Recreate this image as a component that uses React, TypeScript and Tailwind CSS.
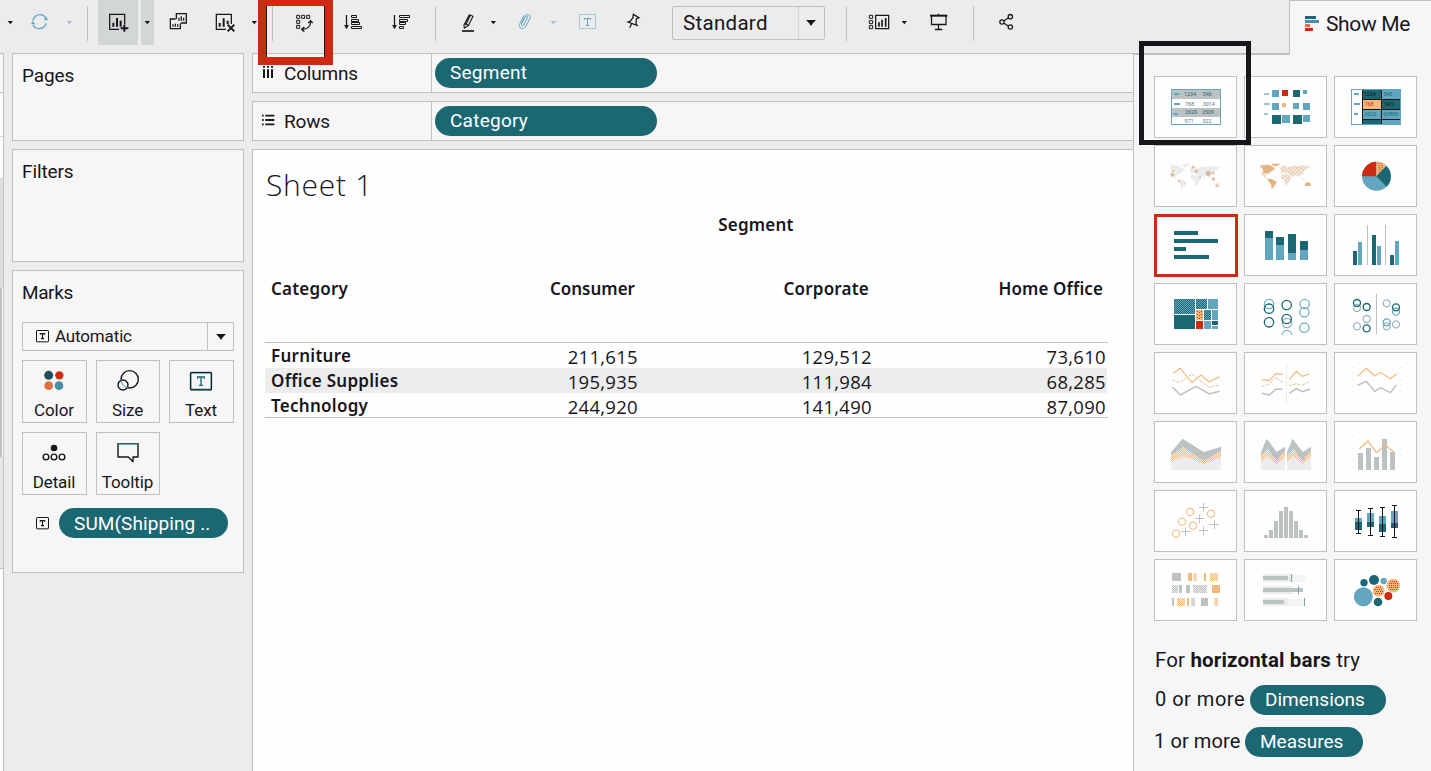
import React from "react";

const TEAL = "#1b6872";
const BLUE = "#63a6c0";
const RED = "#cd2a12";
const ORANGE = "#f4b878";
const GRAY = "#bcc1c1";
const INK = "#18161b";
const PALE = "#ececec";

type Node = React.ReactNode;

/* ---------- toolbar ---------- */

function Tool({ x, w, off = 0, shaded = false, children }: { x: number; w: number; off?: number; shaded?: boolean; children?: Node }) {
  return (
    <button className={shaded ? "h-[45px] shrink-0 bg-[#d3d6d6]" : "h-[45px] shrink-0"}>
      <svg width={w} height={45} viewBox={`${(x - off) * 3} 0 ${w * 3} 135`} fill="none" stroke={INK} strokeWidth="3.8">
        {children}
      </svg>
    </button>
  );
}

function Caret({ cx, color = INK }: { cx: number; color?: string }) {
  return <path d={`M${cx - 8} 63h16l-5 6l-3 4l-3 -4z`} fill={color} stroke="none" />;
}

function Divider() {
  return <div className="mt-[6px] h-[35px] w-px shrink-0 bg-[#bcc1c1]" />;
}

function Toolbar() {
  return (
    <div className="flex h-[53px] min-w-0 flex-1 items-start overflow-hidden">
      <Tool x={0} w={20}><Caret cx={31} /></Tool>
      <Tool x={20} w={40}>
        <g stroke={BLUE}>
          <path d="M98 62c4 -12 12 -18 22 -18c10 0 16 6 19 14M139 70c-4 11 -12 16 -21 16c-9 0 -15 -4 -19 -12" />
          <path d="M132 60h12l-6 -9zM93 72h12l-6 -8z" fill={BLUE} strokeWidth="1" />
        </g>
      </Tool>
      <Tool x={60} w={27}><Caret cx={208} color="#9cbfcc" /></Tool>
      <Divider />
      <div className="w-[10px] shrink-0" />
      <Tool x={98} w={40} shaded>
        <path d="M357 88H329V43H374V74" />
        <path d="M340 80V68M351 80V54M362 80V62M373 75V95M362 85H385" strokeWidth="6" />
      </Tool>
      <div className="w-[3px] shrink-0" />
      <Tool x={141} w={13} shaded><Caret cx={442} /></Tool>
      <Tool x={154} w={46}>
        <path d="M529 56V41H559V69H543M529 57V41" />
        <path d="M527 57H511V86H541V70M519 80V73M526 80V71M533 80V73M537 62V53M544 62V49M551 62V53" />
      </Tool>
      <Tool x={200} w={46}>
        <path d="M678 88H649V43H694V72" />
        <path d="M659 80V69M671 80V55M683 72V62" strokeWidth="6" />
        <path d="M683 74L703 94M703 74L683 94" strokeWidth="6" />
      </Tool>
      <Tool x={246} w={26}><Caret cx={763} /></Tool>
      <Divider />
      <Tool x={273} w={57}>
        <path d="M890 46h9v9h-9zM905 46h9v9h-9zM920 46h9v9h-9zM890 61h9v9h-9zM890 76h9v9h-9z" strokeWidth="3" />
        <path d="M932 65C932 80 921 88 908 88M925 69L932 62L938 69M913 81L905 88L913 95" />
      </Tool>
      <Tool x={330} w={40}>
        <path d="M1039.500 45V78" />
        <path d="M1033 76H1046L1039.500 87Z" fill={INK} strokeWidth="1" />
        <path d="M1054.500 46.500h15v6h-15zM1054.500 58.500h21v6h-21zM1054.500 67.500h24v6h-24zM1054.500 79.500h30v6h-30z" strokeWidth="3" />
      </Tool>
      <Tool x={370} w={65}>
        <path d="M1183.500 45V78" />
        <path d="M1177 76H1190L1183.500 87Z" fill={INK} strokeWidth="1" />
        <path d="M1198.500 46.500h30v6h-30zM1198.500 58.500h24v6h-24zM1198.500 67.500h18v6h-18zM1198.500 79.500h12v6h-12z" strokeWidth="3" />
      </Tool>
      <Divider />
      <Tool x={436} w={44} off={430}>
        <path d="M96 93H132" strokeWidth="5" />
        <path d="M102 75L118 44L129 49L115 77L103 84ZM104 70L115 76M120 47L107 76" strokeWidth="3.400" />
      </Tool>
      <Tool x={480} w={30} off={430}><Caret cx={190} /></Tool>
      <Tool x={510} w={30} off={430}>
        <path d="M275 72L286 49C288 42 300 41 301 50C301 53 300 55 299 57L288 78C284 88 269 88 268 77C268 74 269 72 270 70L282 46M281 75L292 54C295 47 286 45 283 53L275 70C272 79 279 80 283 72" stroke={BLUE} strokeWidth="3" />
      </Tool>
      <Tool x={540} w={30} off={430}><Caret cx={370} color="#9cbfcc" /></Tool>
      <Tool x={570} w={40} off={430}>
        <path d="M448.500 43.500H496.500V85.500H448.500Z" stroke={BLUE} strokeDasharray="3 3" strokeWidth="3" />
        <path d="M463 60V55.500H482V60M472.500 55V76M467 76.500H478" stroke={BLUE} strokeWidth="3" />
      </Tool>
      <Tool x={610} w={45} off={430}>
        <path d="M610 43L627 53L619 57L618 71L621 76L594 66L600 64L609 53ZM605 71L599 83" />
      </Tool>
      <div className="w-[17px] shrink-0" />
      <button className="mt-[6px] flex h-[34px] w-[153px] shrink-0 items-stretch rounded-[2px] border border-[#bcc1c1]">
        <span className="flex w-[126px] items-center border-r border-dotted border-[#bcc1c1] pl-[10px] text-[20.5px] tracking-[0.3px]">Standard</span>
        <span className="flex flex-1 items-center justify-center pr-px">
          <svg width="12" height="8" viewBox="0 0 12 8"><path d="M1 1h10l-3 3l-2 3l-2 -3z" fill={INK} /></svg>
        </span>
      </button>
      <div className="w-[21px] shrink-0" />
      <Divider />
      <Tool x={847} w={48} off={830}>
        <path d="M118 46h10v9h-10zM118 62h10v9h-10zM118 77h10v9h-10z" strokeWidth="3" />
        <path d="M137 46H176V86H137Z" />
        <path d="M147 80V67M156 80V59M167 80V54" strokeWidth="5" />
      </Tool>
      <Tool x={895} w={20} off={830}><Caret cx={223} /></Tool>
      <Tool x={915} w={58} off={830}>
        <path d="M300 47H352" strokeWidth="6" />
        <path d="M304.500 47V73.500H348V47M325.500 41V47M325.500 73V88M315 88.500H337" />
      </Tool>
      <Divider />
      <Tool x={974} w={60} off={830}>
        <circle cx="541" cy="50" r="6.500" /><circle cx="516" cy="66" r="6.500" /><circle cx="541" cy="81" r="6.500" />
        <path d="M522 62L535 54M522 70L535 78" />
      </Tool>
    </div>
  );
}

/* ---------- left cards ---------- */

function TextGlyph() {
  return (
    <svg width="13" height="13" viewBox="0 0 39 39" fill="none" stroke={INK} strokeWidth="3">
      <rect x="1.500" y="1.500" width="36" height="34" rx="2" />
      <path d="M13 14V11H26V14M19.500 11V26M15 26H24" strokeWidth="3.500" />
    </svg>
  );
}

function Tile({ label, view, children }: { label: string; view: string; children: Node }) {
  return (
    <button className="flex h-[63px] flex-col items-center border border-[#bcc1c1] text-[17px] leading-[22px]">
      <svg width="60" height="38" viewBox={view} fill="none" stroke={INK} strokeWidth="4.200">{children}</svg>
      <span className="-ml-px">{label}</span>
    </button>
  );
}

function Sidebar() {
  return (
    <aside className="ml-2 flex w-[232px] shrink-0 flex-col gap-2 text-[19px] leading-6 tracking-[-0.1px]">
      <section className="h-[88px] border border-[#bcc1c1] bg-[#f6f6f6] pl-[9px] pt-[10px]">Pages</section>
      <section className="h-[113px] border border-[#bcc1c1] bg-[#f6f6f6] pl-[9px] pt-[10px]">Filters</section>
      <section className="h-[303px] border border-[#bcc1c1] bg-[#f6f6f6] px-[9px] pt-[10px]">
        <h2 className="h-6 tracking-[-0.4px]">Marks</h2>
        <button className="mt-[17px] flex h-[29px] w-[212px] items-stretch rounded-[1px] border border-[#bcc1c1] text-[17px]">
          <span className="flex w-[185px] items-center gap-[6px] border-r border-[#bcc1c1] pb-px pl-[13px]">
            <TextGlyph />
            <span className="tracking-[-0.15px]">Automatic</span>
          </span>
          <span className="flex flex-1 items-center justify-center">
            <svg width="12" height="8" viewBox="0 0 12 8"><path d="M1 1h10l-3 3l-2 3l-2 -3z" fill={INK} /></svg>
          </span>
        </button>
        <div className="mt-[9px] grid grid-cols-[65px_64px_65px] gap-x-[9px] gap-y-[9px]">
          <Tile label="Color" view="74 33 180 114">
            <g stroke="none">
              <circle cx="145" cy="76" r="13.500" fill="#1f4f5d" />
              <circle cx="177" cy="76" r="12.500" fill={RED} />
              <circle cx="145" cy="107" r="13" fill="#e0713e" />
              <circle cx="176" cy="107" r="13" fill="#4590a8" />
            </g>
          </Tile>
          <Tile label="Size" view="294 33 180 114">
            <circle cx="389" cy="88" r="26" />
            <circle cx="369" cy="105" r="15" fill="#f6f6f6" />
            <path d="M363 88A26 26 0 0 0 385 114" stroke="#4c8796" strokeWidth="3" />
          </Tile>
          <Tile label="Text" view="516 33 180 114">
            <rect x="572" y="68" width="62" height="51" rx="2" stroke={TEAL} strokeWidth="5" />
            <rect x="571.500" y="67.500" width="63" height="52" rx="2" strokeWidth="2.500" />
            <path d="M593 86V81H613V86M603 81V106M597 106H609" stroke={TEAL} strokeWidth="4" />
          </Tile>
          <Tile label="Detail" view="74 249 180 114">
            <circle cx="161" cy="294" r="10" fill={INK} stroke="none" />
            <circle cx="137" cy="321" r="8.500" /><circle cx="161" cy="321" r="8.500" /><circle cx="185" cy="321" r="8.500" />
          </Tile>
          <Tile label="Tooltip" view="294 249 180 114">
            <path d="M354 281H414V321H399V335L385 321H354Z" strokeLinejoin="round" />
            <path d="M355 281H413" stroke={TEAL} strokeWidth="4" />
          </Tile>
        </div>
        <div className="mt-[13px] flex items-center gap-[10px] pl-[14px]">
          <TextGlyph />
          <span className="flex h-[30px] w-[169px] items-center rounded-full bg-[#1b6872] pl-[15px] pt-px text-[19px] tracking-[0.1px] text-white">SUM(Shipping ..</span>
        </div>
      </section>
    </aside>
  );
}

/* ---------- worksheet ---------- */

const ROWS = [
  ["Furniture", "211,615", "129,512", "73,610"],
  ["Office Supplies", "195,935", "111,984", "68,285"],
  ["Technology", "244,920", "141,490", "87,090"],
];

function Shelf({ label, pill, icon }: { label: string; pill: string; icon: Node }) {
  return (
    <div className="flex h-10 shrink-0 border-y border-l border-[#bcc1c1] bg-[#f6f6f6] text-[19px]">
      <div className="flex w-[179px] shrink-0 items-center border-r border-[#bcc1c1] pl-[9px]">
        <span className="pb-0.5">{icon}</span>
        <span className="ml-[9px] pt-[3px] tracking-[-0.2px]">{label}</span>
      </div>
      <div className="flex items-center pl-[3px]">
        <span className="flex h-[30px] w-[222px] items-center rounded-full bg-[#1b6872] pl-[15px] pt-px tracking-[0.25px] text-white">{pill}</span>
      </div>
    </div>
  );
}

function Worksheet() {
  return (
    <main className="ml-2 flex w-[881px] shrink-0 flex-col gap-2">
      <Shelf
        label="Columns"
        pill="Segment"
        icon={
          <svg width="13" height="12" viewBox="0 0 39 36" stroke={INK} strokeWidth="6">
            <path d="M6 0V5M6 10V36M18 0V5M18 10V36M30 0V5M30 10V36" />
          </svg>
        }
      />
      <Shelf
        label="Rows"
        pill="Category"
        icon={
          <svg width="13" height="12" viewBox="0 0 39 36" stroke={INK} strokeWidth="5.500">
            <path d="M0 5H5M10 5H37M0 18H5M10 18H37M0 31H5M10 31H37" />
          </svg>
        }
      />
      <section className="flex-1 border-l border-t border-[#bcc1c1] bg-[#fefefe] pl-3 font-['Open_Sans',sans-serif] text-[18px]">
        <h1 className="h-[60px] pt-[15px] pl-px text-[30px] font-light leading-[40px] tracking-[0.75px]">Sheet 1</h1>
        <div className="w-[843px]">
          <div className="grid h-[132px] grid-cols-[140px_234px_234px_234px] grid-rows-[30px_98px] font-['Noto_Sans',sans-serif] text-[17px] font-semibold tracking-[0.2px]">
            <div className="col-span-3 col-start-2 flex items-center justify-center">Segment</div>
            <div className="flex items-center pl-[6px]">Category</div>
            <div className="flex items-center justify-end pr-1 tracking-normal">Consumer</div>
            <div className="flex items-center justify-end pr-1">Corporate</div>
            <div className="flex items-center justify-end pr-1 tracking-[0.1px]">Home Office</div>
          </div>
          <div className="border-y border-[#bcc1c1]">
            {ROWS.map((row, i) => (
              <div key={row[0]} className={`grid grid-cols-[140px_234px_234px_234px] leading-[24px] ${i === 1 ? "h-[25px] w-[842px] bg-[#ececec]" : i === 2 ? "h-[24px]" : "h-[25px]"}`}>
                <span className="whitespace-nowrap pl-[6px] pt-px font-['Noto_Sans',sans-serif] text-[17px] font-semibold tracking-[0.28px]">{row[0]}</span>
                {row.slice(1).map((v) => (
                  <span key={v} className="pr-px pt-[2px] text-right text-[18.5px] tracking-[0.3px]">{v}</span>
                ))}
              </div>
            ))}
          </div>
        </div>
      </section>
    </main>
  );
}

/* ---------- chart gallery ---------- */

const bars = (color: string, list: number[][]) =>
  list.map(([x, y, w, h], i) => <rect key={i} x={x} y={y} width={w} height={h} fill={color} />);

const rings = (color: string, r: number, list: number[][], width = 4) =>
  list.map(([x, y], i) => <circle key={i} cx={x} cy={y} r={r} fill="none" stroke={color} strokeWidth={width} />);

const tiny = (list: [number, number, string, string][]) =>
  list.map(([x, y, s, fill]) => (
    <text key={s} x={x} y={y} fontSize="16" textAnchor="middle" fill={fill}>{s}</text>
  ));

const LAND = "M108 319L120 315L138 317L137 322L144 326L150 325L152 333L145 334L138 342L128 345L122 352L128 356L134 359L131 360L120 354L112 344L117 330L110 325ZM142 314L155 312L168 312L160 319L151 322L144 318ZM133 359L143 359L158 368L153 378L148 380L144 390L141 386L141 375L133 366ZM172 321L180 317L190 324L212 319L222 320L230 318L258 321L254 326L243 333L239 342L231 346L228 353L222 350L215 347L208 354L204 347L200 352L194 344L185 340L170 342L172 334L168 328ZM171 346L188 344L198 352L204 353L196 364L191 376L184 377L180 362L171 357ZM244 370L254 367L260 374L258 380L246 380L242 376ZM230 354L239 363L246 366L238 358Z";

const THUMBS: { name: string; y: number; art: Node }[] = [
  {
    name: "Text table", y: 48, art: <>
      <rect x="112.500" y="88.500" width="147" height="105" fill="#fefefe" stroke={BLUE} strokeWidth="3" />
      {bars(GRAY, [[114, 90, 144, 27], [114, 144, 144, 27]])}
      {bars(BLUE, [[120, 99, 15, 6], [120, 129, 18, 6], [120, 159, 12, 6]])}
      {tiny([[168, 109, "1234", TEAL], [220, 109, "546", TEAL], [167, 137, "768", "#55747a"], [224, 137, "3014", "#55747a"], [171, 163, "2620", TEAL], [222, 163, "2509", TEAL], [165, 188, "971", "#55747a"], [219, 188, "322", "#55747a"]])}
    </>,
  },
  {
    name: "Heat map", y: 48, art: <>
      {bars("#9fc3cf", [[390, 99, 15, 6], [390, 129, 18, 6], [390, 159, 12, 6]])}
      {bars(BLUE, [[414, 90, 21, 21], [507, 90, 12, 12], [414, 129, 21, 21], [477, 129, 18, 18], [507, 129, 21, 21], [444, 165, 24, 24], [507, 165, 21, 21]])}
      {bars(RED, [[444, 90, 18, 18]])}
      {bars(ORANGE, [[444, 129, 12, 12]])}
      {bars(TEAL, [[477, 90, 21, 21], [414, 165, 27, 27], [477, 165, 27, 27]])}
    </>,
  },
  {
    name: "Highlight table", y: 48, art: <>
      <rect x="652.500" y="88.500" width="147" height="105" fill="#fefefe" stroke={BLUE} strokeWidth="3" />
      {bars(INK, [[684, 90, 114, 102]])}
      {bars(TEAL, [[687, 90, 54, 27], [744, 120, 54, 27], [687, 180, 54, 12]])}
      {bars(BLUE, [[744, 90, 56, 27], [687, 150, 54, 27], [744, 150, 56, 27], [744, 180, 56, 12], [660, 99, 15, 6], [660, 129, 18, 6], [660, 159, 12, 6]])}
      {bars(ORANGE, [[687, 120, 54, 27]])}
      {tiny([[707, 108, "1234", INK], [762, 108, "546", TEAL], [705, 138, "768", RED], [764, 138, "543", INK], [709, 168, "2620", TEAL], [770, 168, "60890", TEAL]])}
    </>,
  },
  {
    name: "Symbol map", y: 255, art: <>
      <path d={LAND} fill={PALE} />
      <g fill={GRAY} stroke={ORANGE} strokeWidth="2">
        {[[115, 344, 5], [117, 332, 2.5], [136, 363, 2.5], [177, 322, 3], [187, 334, 4], [223, 340, 7], [238, 357, 4], [237, 339, 3], [248, 377, 3], [198, 351, 2], [151, 367, 1], [171, 331, 1], [137, 333, 1]].map(([x, y, r]) => <circle key={`${x}-${y}`} cx={x} cy={y} r={r} />)}
      </g>
    </>,
  },
  {
    name: "Map", y: 255, art: <>
      <defs><pattern id="dots" width="12" height="12" patternUnits="userSpaceOnUse"><rect width="12" height="12" fill={PALE} /><rect x="0" y="0" width="4.500" height="4.500" fill={ORANGE} /><rect x="6" y="6" width="4.500" height="4.500" fill={ORANGE} /></pattern></defs>
      <g transform="translate(270 -2)">
        <path d={LAND} fill="url(#dots)" />
        <path d="M108 319L138 317L150 325L152 330L138 338L136 342L118 342L117 330ZM142 314L170 313L160 319L151 320ZM133 357L143 359L158 368L153 378L144 388L141 375L133 366ZM244 372L254 369L262 374L258 380L242 380Z" fill="#e3b384" />
      </g>
    </>,
  },
  {
    name: "Pie chart", y: 255, art: <>
      <circle cx="727.500" cy="349" r="43.500" fill={BLUE} />
      <path d="M727 349V305.500A43.500 43.500 0 0 0 684 349Z" fill={RED} />
      <path d="M727 349V305.500A43.500 43.500 0 0 1 757 318Z" fill={ORANGE} />
      <path d="M731 311h3m6 0h3m-9 6h3m6 0h3m-12 6h3m6 0h3m-12 6h3m3 0h3m-9 6h3" stroke={RED} strokeWidth="3" />
      <path d="M727 349L757 318A43.500 43.500 0 0 1 758 380Z" fill={TEAL} />
    </>,
  },
  { name: "Horizontal bars", y: 462, art: bars(TEAL, [[120, 513, 72, 12], [120, 537, 132, 12], [120, 561, 36, 12], [120, 585, 105, 12]]) },
  {
    name: "Stacked bars", y: 462, art: <>
      {bars(BLUE, [[393, 534, 24, 66], [426, 555, 24, 45], [462, 579, 24, 21], [498, 570, 24, 30]])}
      {bars(TEAL, [[393, 513, 24, 21], [426, 531, 24, 24], [462, 522, 24, 57], [498, 543, 24, 27]])}
    </>,
  },
  {
    name: "Side-by-side bars", y: 462, art: <>
      {bars(GRAY, [[699, 495, 3, 120], [753, 495, 3, 120]])}
      {bars(TEAL, [[657, 573, 12, 42], [714, 525, 12, 90], [768, 585, 12, 30]])}
      {bars(BLUE, [[672, 546, 12, 69], [729, 558, 12, 57], [783, 543, 12, 72]])}
    </>,
  },
  {
    name: "Treemap", y: 24, art: <>
      <defs><pattern id="weave" width="6" height="6" patternUnits="userSpaceOnUse"><rect width="6" height="6" fill={BLUE} /><path d="M0 0h3v3h-3zM3 3h3v3h-3z" fill={TEAL} /></pattern></defs>
      {bars("url(#weave)", [[120, 72, 63, 45], [186, 72, 33, 30], [210, 105, 21, 30]])}
      {bars(BLUE, [[222, 72, 30, 30], [234, 105, 18, 30], [210, 138, 21, 24], [234, 153, 18, 9]])}
      {bars(TEAL, [[120, 120, 63, 42], [234, 138, 18, 12]])}
      {bars(ORANGE, [[186, 105, 21, 30]])}
      {bars(RED, [[186, 138, 21, 24], [189, 108, 3, 3], [195, 111, 3, 3], [201, 108, 3, 3], [189, 117, 3, 3], [195, 120, 3, 3], [201, 117, 3, 3], [189, 126, 3, 3], [195, 129, 3, 3], [201, 126, 3, 3]])}
    </>,
  },
  {
    name: "Circle views", y: 24, art: <>
      {rings("#7cafc2", 14, [[405, 87], [459, 144], [512, 87], [511, 112], [511, 158]])}
      {rings(TEAL, 14, [[405, 101], [405, 142], [458, 90], [458, 132]])}
      <path d="M445 180a14 14 0 0 1 28 0" fill="none" stroke="#7cafc2" strokeWidth="3.500" />
    </>,
  },
  {
    name: "Side-by-side circles", y: 24, art: <>
      <rect x="726" y="57" width="3" height="120" fill={GRAY} />
      {rings("#9db8bf", 10.5, [[669, 99], [669, 154], [698, 132], [758, 85], [786, 148], [758, 154]])}
      {rings(BLUE, 10.5, [[758, 142], [786, 110]])}
      {rings(TEAL, 10.5, [[669, 84], [698, 96], [698, 160], [786, 97]])}
    </>,
  },
  {
    name: "Continuous lines", y: 231, art: <g fill="none" strokeWidth="3.500">
      <path d="M117 296L138 279L174 323L201 300L225 321L256 305" stroke={ORANGE} />
      <path d="M117 315L138 323L174 297L201 319L225 337L256 330" stroke={PALE} />
      <path d="M117 315L138 323L174 297L201 319L225 337L256 330" stroke={ORANGE} strokeDasharray="5 9" strokeWidth="3" />
      <path d="M115 336L139 360L186 334L226 357L256 349" stroke={GRAY} strokeWidth="4.500" />
    </g>,
  },
  {
    name: "Discrete lines", y: 231, art: <g fill="none" strokeWidth="3.500">
      <rect x="456" y="264" width="3" height="120" fill={PALE} stroke="none" />
      <path d="M384 314L406 317L425 296L446 298M466 313L487 289L505 304L528 297" stroke={ORANGE} />
      <path d="M384 333L406 328L425 307L446 323M466 332L487 326L505 331L528 318" stroke={PALE} />
      <path d="M384 333L406 328L425 307L446 323M466 332L487 326L505 331L528 318" stroke={ORANGE} strokeDasharray="5 9" strokeWidth="3" />
      <path d="M384 355L406 360L425 343L446 343M466 355L487 341L505 350L528 342" stroke={GRAY} strokeWidth="4.500" />
    </g>,
  },
  {
    name: "Dual lines", y: 231, art: <g fill="none" strokeWidth="3.500">
      <path d="M655.500 276V370M799.500 276V370" stroke={PALE} strokeWidth="9" strokeDasharray="3 15" />
      <path d="M670 304L697 280L722 303L740 292L769 311L787 297" stroke={ORANGE} />
      <path d="M670 331L697 319L722 349L740 338L769 353L787 330" stroke={GRAY} strokeWidth="4.500" />
    </g>,
  },
  {
    name: "Continuous area", y: 438, art: <>
      <defs><pattern id="check" width="6" height="6" patternUnits="userSpaceOnUse"><rect width="6" height="6" fill="#f9ecdd" /><path d="M0 0h3v3h-3zM3 3h3v3h-3z" fill={ORANGE} /></pattern></defs>
      <path d="M111 532L146 491L209 531L261 515V585H111Z" fill={GRAY} />
      <path d="M111 540L148 516L209 557L261 527V585H111Z" fill="url(#check)" />
      <path d="M111 560L148 543L209 568L261 545V585H111Z" fill={PALE} />
    </>,
  },
  {
    name: "Discrete area", y: 438, art: [0, 78].map((d) => (
      <g key={d} transform={`translate(${d})`}>
        <path d="M381 532L398 491L428 531L453 515V585H381Z" fill={GRAY} />
        <path d="M381 543L400 520L428 557L453 526V585H381Z" fill="url(#check)" />
        <path d="M381 562L400 544L428 568L453 545V585H381Z" fill={PALE} />
      </g>
    )),
  },
  {
    name: "Dual combination", y: 438, art: <>
      <path d="M657 483V578M799.500 483V578" stroke={PALE} strokeWidth="7" strokeDasharray="3 15" />
      {bars(GRAY, [[672, 534, 15, 51], [696, 519, 15, 66], [720, 546, 15, 39], [744, 492, 15, 93], [768, 531, 15, 54]])}
      <path d="M676 522L702 498L727 533L754 510L780 531" fill="none" stroke={ORANGE} strokeWidth="3.500" />
    </>,
  },
  {
    name: "Scatter plot", y: 30, art: <>
      {rings(ORANGE, 11, [[168, 96], [231, 101], [144, 125], [177, 137], [126, 161]], 3)}
      <path d="M195 82.500h27M208.500 69v27M183 115.500h27M196.500 103v27M228 133.500h27M241.500 120v27M141 154.500h27M154.500 142v27M195 151.500h27M208.500 139v27" stroke={GRAY} strokeWidth="3" />
    </>,
  },
  { name: "Histogram", y: 30, art: bars(GRAY, [[390, 165, 12, 9], [405, 150, 12, 24], [420, 123, 12, 51], [435, 93, 12, 81], [450, 81, 12, 93], [465, 93, 12, 81], [480, 123, 12, 51], [495, 150, 12, 24], [510, 165, 12, 9]]) },
  {
    name: "Box plot", y: 30, art: <>
      {bars(BLUE, [[663, 114, 21, 12], [699, 99, 21, 27], [735, 108, 21, 24], [771, 93, 21, 36]])}
      {bars(TEAL, [[663, 126, 21, 24], [699, 126, 21, 15], [735, 132, 21, 24], [771, 129, 21, 15]])}
      <path d="M673.500 91V160M666 91.500h15M666 160.500h15M709.500 85V166M702 85.500h15M702 166.500h15M745.500 82V169M738 82.500h15M738 169.500h15M781.500 76V172M774 76.500h15M774 172.500h15" stroke={INK} strokeWidth="3" />
    </>,
  },
  {
    name: "Gantt", y: 237, art: <>
      <defs>
        <pattern id="graycheck" width="6" height="6" patternUnits="userSpaceOnUse"><rect width="6" height="6" fill={PALE} /><path d="M0 0h3v3h-3zM3 3h3v3h-3z" fill={GRAY} /></pattern>
      </defs>
      {bars(GRAY, [[114, 279, 27, 24], [135, 315, 9, 24], [156, 315, 12, 24], [114, 354, 6, 24], [201, 354, 21, 24]])}
      {bars(ORANGE, [[162, 279, 12, 24], [210, 279, 6, 24], [234, 315, 24, 24], [159, 354, 6, 24]])}
      {bars("url(#check)", [[178, 279, 10, 24], [228, 279, 24, 24], [129, 354, 24, 24], [241, 354, 11, 24]])}
      {bars("url(#graycheck)", [[114, 315, 18, 24], [177, 315, 42, 24], [172, 354, 11, 24]])}
    </>,
  },
  {
    name: "Bullet graph", y: 237, art: <>
      {bars(PALE, [[387, 282, 90, 24], [387, 318, 90, 24], [387, 354, 75, 24]])}
      {bars("#f4f4f4", [[477, 285, 39, 21], [462, 357, 48, 21]])}
      {bars(GRAY, [[387, 288, 75, 12], [387, 324, 120, 12], [387, 360, 63, 12]])}
      {bars("#7ca3ac", [[471, 282, 3, 24], [492, 318, 3, 24], [510, 354, 3, 24]])}
    </>,
  },
  {
    name: "Packed bubbles", y: 237, art: <>
      {[[688, 350, 28.5, BLUE], [690, 308, 11, TEAL], [720, 300, 15, TEAL], [749, 303, 9.5, BLUE], [778, 317, 20.5, ORANGE], [734, 332, 18, ORANGE], [763, 348, 12, RED], [732, 366, 13, TEAL]].map(([x, y, r, f]) => (
        <circle key={`${x}`} cx={x} cy={y} r={r} fill={f as string} />
      ))}
      <path d="M726 322.500h18M723 328.500h21M726 334.500h21M723 340.500h21M768 304.500h21M765 310.500h27M765 316.500h27M765 322.500h27M768 328.500h21" stroke={RED} strokeWidth="3" strokeDasharray="3 3" />
    </>,
  },
];

function ShowMe() {
  return (
    <aside className="min-w-0 flex-1 border-l border-[#bcc1c1] bg-[#f6f6f6] pl-5 pt-[23px]">
      <div className="grid grid-cols-[83px_83px_83px] gap-[7px]">
        {THUMBS.map(({ name, y, art }, i) => (
          <button
            key={name}
            aria-label={name}
            className={i === 6
              ? "-mb-px -mr-px h-[63px] w-[84px] border-[3px] border-[#cd2a12] bg-[#fefefe]"
              : "h-[62px] border border-[#bcc1c1] bg-[#fefefe]"}
          >
            {i === 6
              ? <svg width="78" height="57" viewBox={`69 ${y + 9} 234 171`}>{art}</svg>
              : <svg width="81" height="60" viewBox={`${63 + (i % 3) * 270} ${y + 3} 243 180`}>{art}</svg>}
          </button>
        ))}
      </div>
      <div className="mt-[26px] flex flex-col pl-px text-[20px]">
        <p className="h-[27px] text-[20.5px] leading-[27px] tracking-[0.15px]">For <b>horizontal bars</b> try</p>
        <p className="mt-[11px] flex h-[30px] items-center gap-[5px]">
          <span className="w-[90px] whitespace-nowrap pb-[2px] tracking-[0.5px]">0 or more</span>
          <span className="flex h-[30px] w-[136px] items-center rounded-full bg-[#1b6872] pl-[15px] pt-px text-[19px] text-white">Dimensions</span>
        </p>
        <p className="mt-3 flex h-[30px] items-center gap-[5px]">
          <span className="-ml-px w-[86px] whitespace-nowrap pb-[2px] tracking-[0.1px]">1 or more</span>
          <span className="flex h-[30px] w-[118px] items-center rounded-full bg-[#1b6872] pl-[15px] pt-px text-[19px] text-white">Measures</span>
        </p>
      </div>
    </aside>
  );
}

export default function App() {
  return (
    <div className="relative flex h-[771px] w-[1431px] flex-col overflow-hidden bg-[#ececec] font-['Roboto',sans-serif] text-[#18161b]">
      <header className="flex h-[53px] shrink-0">
        <Toolbar />
        <div className="flex h-[54px] w-[142px] shrink-0 border-l border-t border-[#bcc1c1] bg-[#f6f6f6] pl-[15px]">
          <svg className="mt-[15px]" width="15" height="16" viewBox="0 0 15 16">
            <path d="M0 0h11v3h-11z" fill={TEAL} /><path d="M0 4h14v3h-14z" fill="#4590a8" />
            <path d="M0 8h5v3h-5z" fill="#e0713e" /><path d="M0 12h8v3h-8z" fill={RED} />
          </svg>
          <span className="ml-[6px] mt-[8px] text-[21px] leading-[30px] tracking-[-0.35px]">Show Me</span>
        </div>
      </header>
      <div className="flex min-h-0 flex-1">
        <div className="flex w-1 shrink-0 flex-col border-r border-t border-[#bcc1c1] bg-[#fefefe]">
          <div className="h-[39px] border-b border-[#bcc1c1] bg-[#f6f6f6]" />
          <div className="h-[44px] border-b border-dotted border-[#bcc1c1]" />
          <div className="mt-[41px] h-[110px] bg-[#dcdfdf]" />
          <div className="h-[169px] w-[2px] bg-[#bcc1c1]" />
          <div className="h-[112px] border-b border-[#bcc1c1] bg-[#e6e8e8]" />
        </div>
        <Sidebar />
        <Worksheet />
        <ShowMe />
      </div>
      <div className="absolute left-[1133px] top-[53px] h-[2px] w-[157px] bg-[#bcc1c1]" />
      <div className="absolute left-[258px] top-0 h-[65px] w-[75px] border-x-8 border-b-8 border-t-[6px] border-[#cd2a12]">
        <div className="h-full border-x border-[#18161b]" />
      </div>
      <div className="absolute left-[1139px] top-[41px] h-[104px] w-[112px] border-[5px] border-[#18161b]" />
    </div>
  );
}
